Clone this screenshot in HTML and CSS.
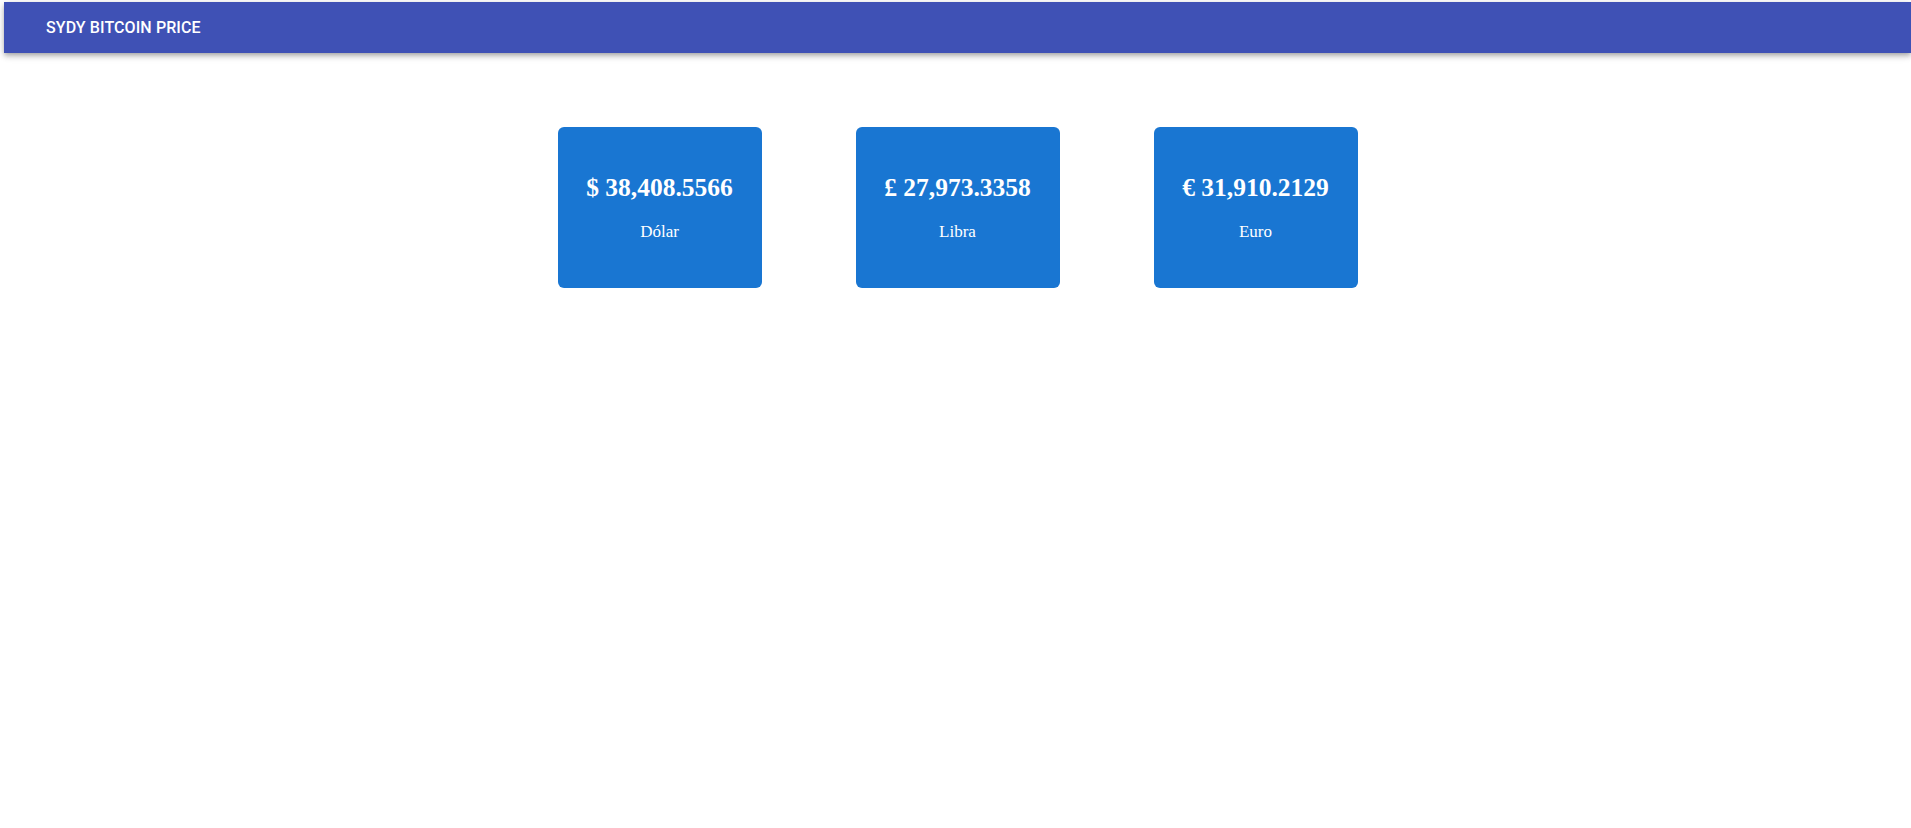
FILE: index.html
```html
<!DOCTYPE html>
<html lang="es">
<head>
<meta charset="utf-8">
<title>Sydy Bitcoin Price</title>
<link rel="stylesheet" href="styles.css">
</head>
<body>
<div class="app">
  <header class="toolbar">
    <div class="toolbar-title">SYDY BITCOIN PRICE</div>
  </header>
  <main class="prices">
    <div class="card">
      <h2 class="price">$ 38,408.5566</h2>
      <p class="label">Dólar</p>
    </div>
    <div class="card">
      <h2 class="price">£ 27,973.3358</h2>
      <p class="label">Libra</p>
    </div>
    <div class="card">
      <h2 class="price">€ 31,910.2129</h2>
      <p class="label">Euro</p>
    </div>
  </main>
</div>
</body>
</html>
```
FILE: styles.css
```css
html, body {
  margin: 0;
  padding: 0;
  background: #ffffff;
}
body {
  font-family: "Liberation Serif", "Times New Roman", serif;
}
.app {
  padding: 2px 0 0 4px;
}
.toolbar {
  height: 51px;
  background: #3f51b5;
  display: flex;
  align-items: center;
  padding-left: 42px;
  box-shadow: 0 2px 4px -1px rgba(0,0,0,.2), 0 4px 5px 0 rgba(0,0,0,.14), 0 1px 10px 0 rgba(0,0,0,.12);
}
.toolbar-title {
  font-family: Roboto, "Liberation Sans", sans-serif;
  font-weight: 500;
  font-size: 16px;
  letter-spacing: 0.1px;
  color: #ffffff;
}
.prices {
  display: flex;
  justify-content: center;
  gap: 94px;
  margin-top: 74px;
}
.card {
  width: 204px;
  height: 161px;
  box-sizing: border-box;
  padding-top: 46px;
  background: #1976d2;
  border-radius: 6px;
  color: #ffffff;
  text-align: center;
  display: flex;
  flex-direction: column;
  align-items: center;
}
.price {
  margin: 0;
  font-size: 25.5px;
  font-weight: bold;
}
.label {
  margin: 19px 0 0;
  font-size: 17px;
}
```
